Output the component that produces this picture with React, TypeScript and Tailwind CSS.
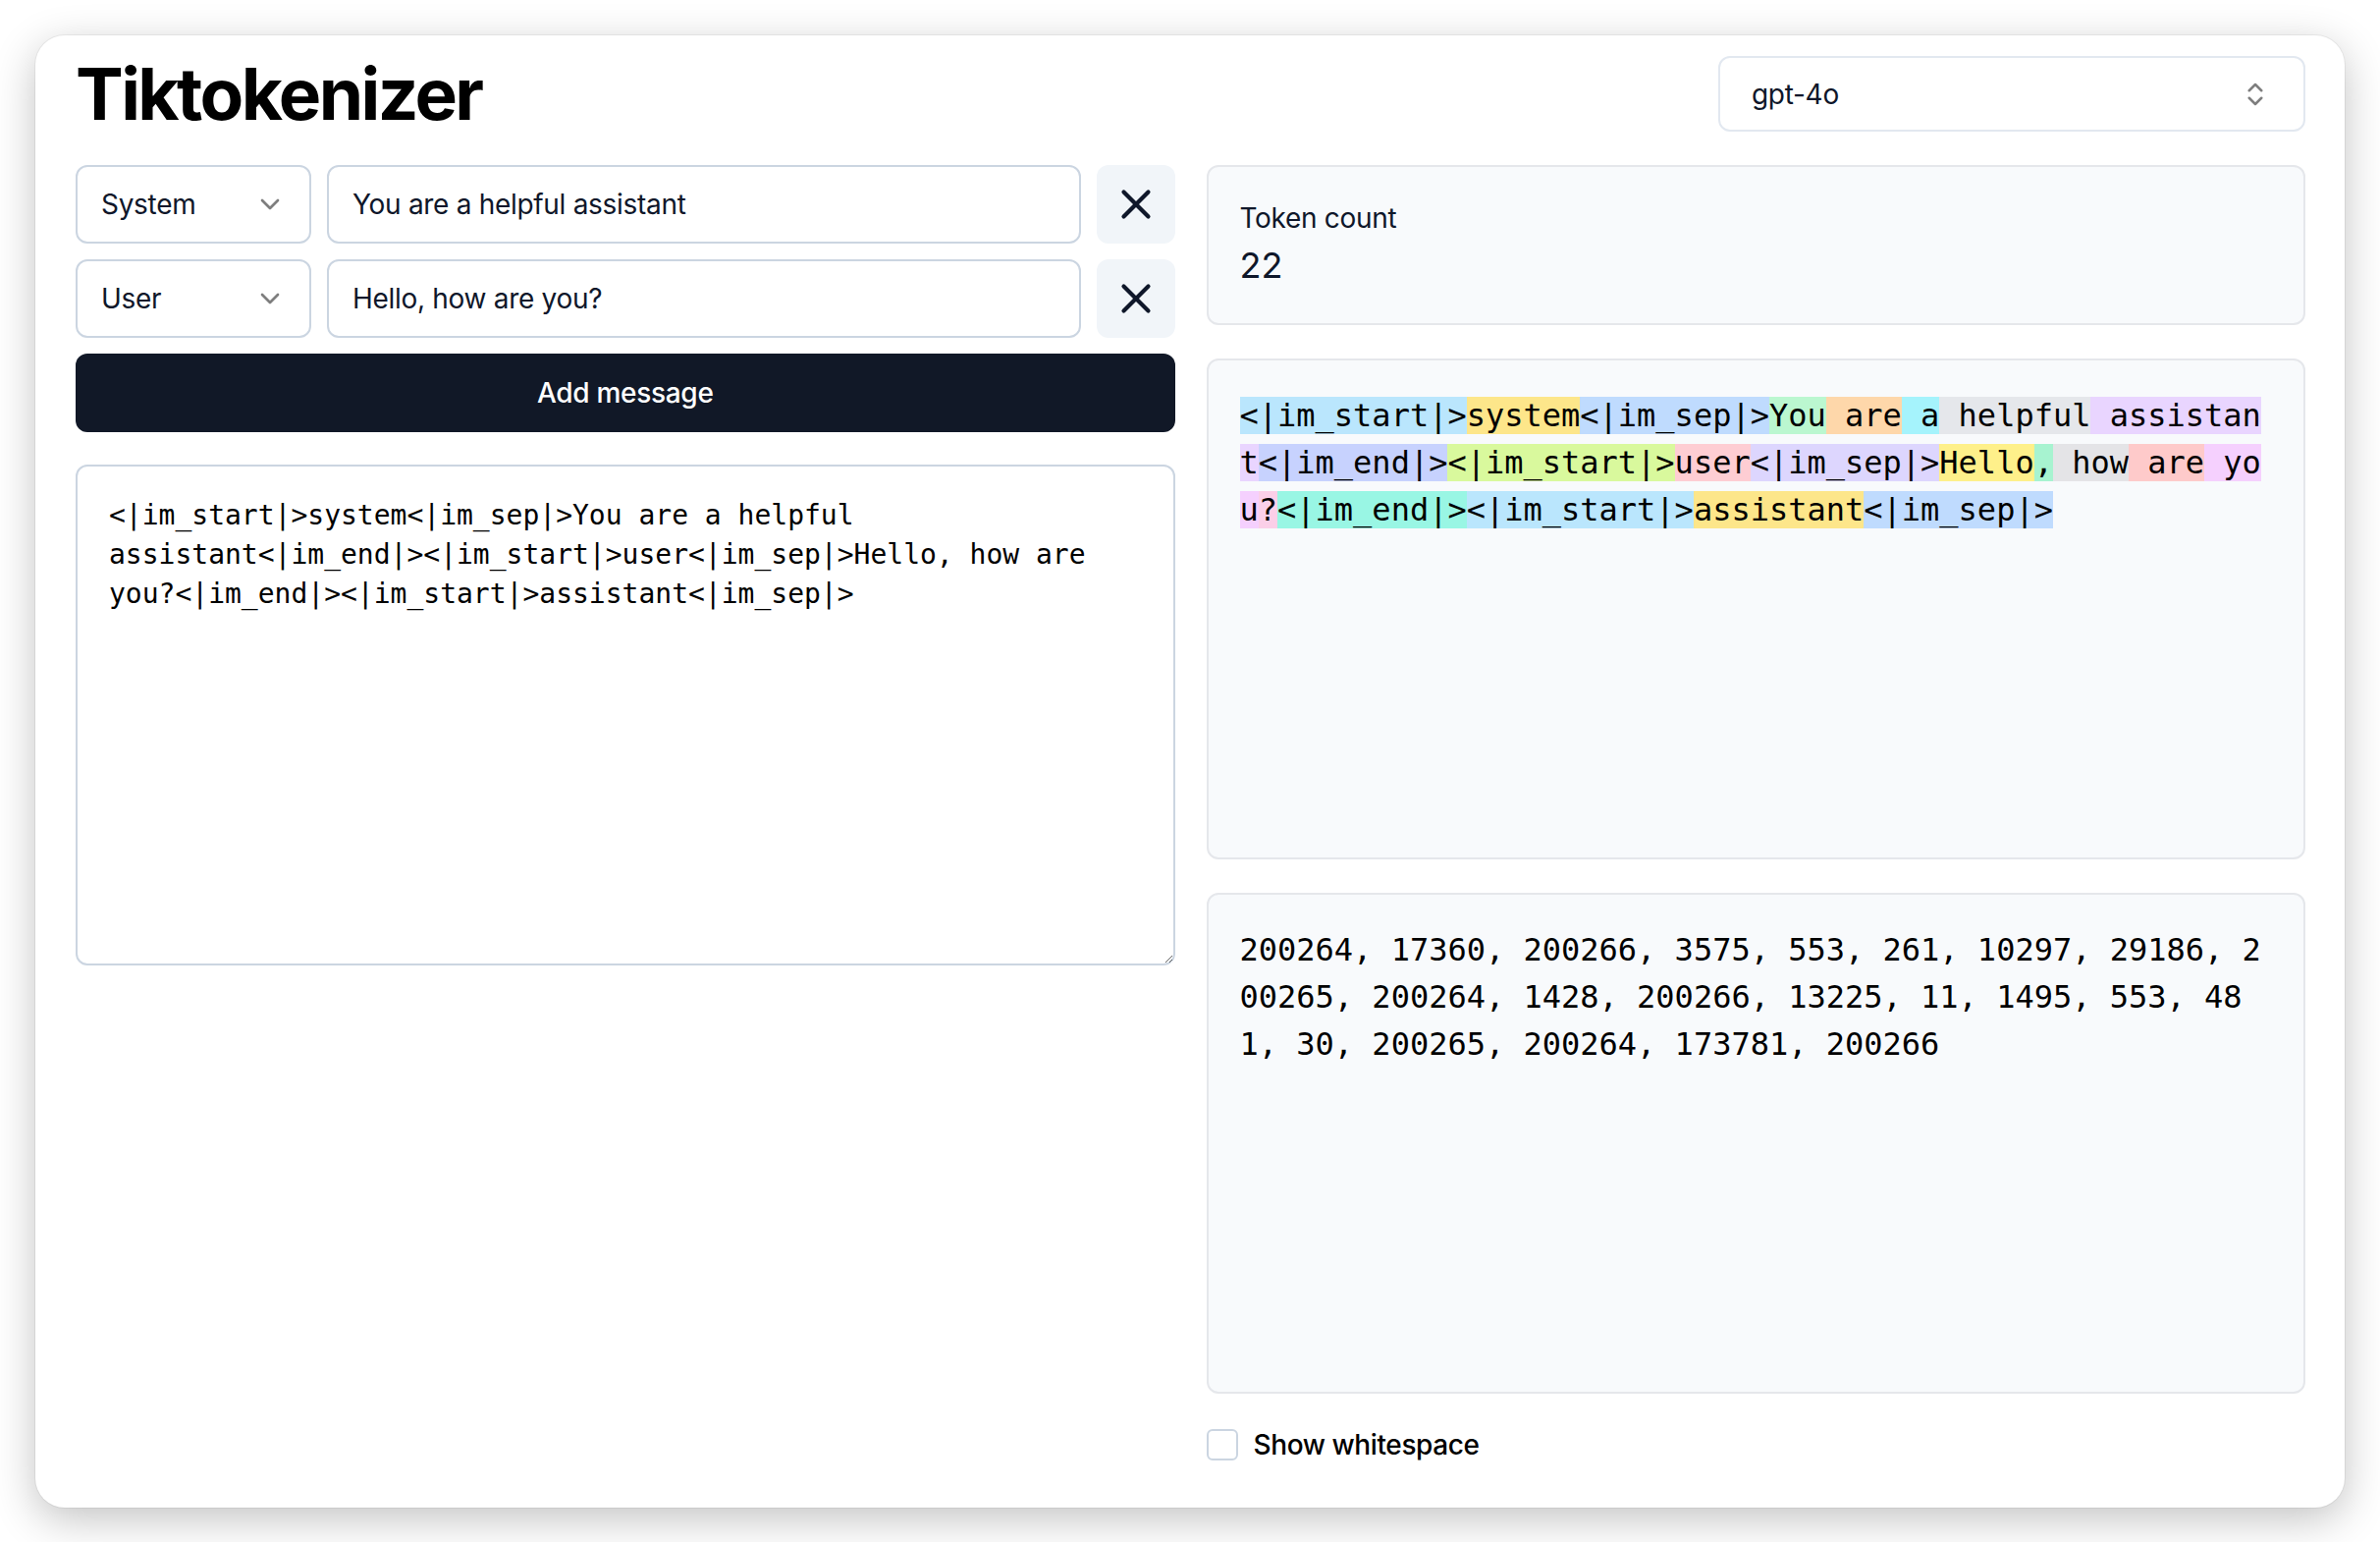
import React from "react";
import { X, ChevronDown, ChevronsUpDown } from "lucide-react";

const TOKENS: [string, string][] = [
  ["<|im_start|>", "bg-[#bae6fd]"],
  ["system", "bg-[#fde68a]"],
  ["<|im_sep|>", "bg-[#bfdbfe]"],
  ["You", "bg-[#bbf7d0]"],
  [" are", "bg-[#fed7aa]"],
  [" a", "bg-[#a5f3fc]"],
  [" helpful", "bg-[#e5e7eb]"],
  [" assistant", "bg-[#e9d5ff]"],
  ["<|im_end|>", "bg-[#c7d2fe]"],
  ["<|im_start|>", "bg-[#d9f99d]"],
  ["user", "bg-[#fecdd3]"],
  ["<|im_sep|>", "bg-[#ddd6fe]"],
  ["Hello", "bg-[#fef08a]"],
  [",", "bg-[#a7f3d0]"],
  [" how", "bg-[#e4e4e7]"],
  [" are", "bg-[#fecaca]"],
  [" you", "bg-[#f5d0fe]"],
  ["?", "bg-[#fbcfe8]"],
  ["<|im_end|>", "bg-[#99f6e4]"],
  ["<|im_start|>", "bg-[#bae6fd]"],
  ["assistant", "bg-[#fde68a]"],
  ["<|im_sep|>", "bg-[#bfdbfe]"],
];

const IDS = [
  200264, 17360, 200266, 3575, 553, 261, 10297, 29186, 200265, 200264, 1428,
  200266, 13225, 11, 1495, 553, 481, 30, 200265, 200264, 173781, 200266,
];

const PROMPT =
  "<|im_start|>system<|im_sep|>You are a helpful assistant<|im_end|><|im_start|>user<|im_sep|>Hello, how are you?<|im_end|><|im_start|>assistant<|im_sep|>";

const sans = { fontFamily: "Inter, 'Noto Sans', sans-serif" };
const mono = { fontFamily: "'DejaVu Sans Mono', 'Liberation Mono', monospace" };

function MessageRow({ role, content }: { role: string; content: string }) {
  return (
    <div className="flex h-[80px] gap-[16px]">
      <div className="flex h-[80px] w-[240px] shrink-0 items-center justify-between rounded-[12px] border-2 border-[#cbd5e1] bg-white pl-[24px] pr-[24px] text-[28px] leading-[40px] tracking-[-0.3px] text-[#0f172a]">
        <span>{role}</span>
        <ChevronDown size={32} strokeWidth={2} className="text-black opacity-50" />
      </div>
      <input
        readOnly
        value={content}
        className="h-[80px] min-w-0 flex-1 rounded-[12px] border-2 border-[#cbd5e1] bg-white px-[24px] text-[28px] leading-[40px] tracking-[-0.3px] text-[#0f172a] outline-none"
        style={sans}
      />
      <div className="flex h-[80px] w-[80px] shrink-0 items-center justify-center rounded-[12px] bg-[#f1f5f9] text-[#0f172a]">
        <X size={50} strokeWidth={2} />
      </div>
    </div>
  );
}

export default function App() {
  return (
    <div className="h-[1570px] w-[2424px] overflow-hidden bg-white pl-[36px] pt-[36px]" style={sans}>
      <div className="h-[1499px] w-[2352px] rounded-[30px] bg-white pl-[41px] pr-[40px] pt-[21px] shadow-[0_12px_44px_rgba(0,0,0,0.24),0_0_0_1px_rgba(0,0,0,0.05)]">
        <header className="flex h-[77px] items-center justify-between">
          <h1 className="text-[73px] font-bold leading-[80px] tracking-[-2.6px] text-black">Tiktokenizer</h1>
          <div className="flex h-[77px] w-[598px] items-center justify-between rounded-[12px] border-2 border-[#e2e8f0] bg-white pl-[32px] pr-[34px] text-[28px] leading-[40px] tracking-[-0.3px] text-[#0f172a]">
            <span>gpt-4o</span>
            <ChevronsUpDown size={30} strokeWidth={2} className="text-black opacity-50" />
          </div>
        </header>

        <div className="mt-[34px] grid grid-cols-2 gap-x-[32px]">
          <div className="flex flex-col">
            <div className="flex flex-col gap-[16px]">
              <MessageRow role="System" content="You are a helpful assistant" />
              <MessageRow role="User" content="Hello, how are you?" />
              <button className="flex h-[80px] items-center justify-center rounded-[12px] bg-[#111827] text-[28px] font-medium leading-[40px] tracking-[-0.3px] text-white">
                Add message
              </button>
            </div>
            <textarea
              readOnly
              defaultValue={PROMPT}
              className="mt-[33px] h-[510px] w-full rounded-[12px] border-2 border-[#cbd5e1] bg-white px-[32px] pb-[30px] pt-[30px] text-[28px] leading-[40px] text-black outline-none"
              style={mono}
            />
          </div>

          <div className="flex flex-col">
            <div className="rounded-[12px] border-2 border-[#e5e7eb] bg-[#f8fafc] px-[32px] pb-[31px] pt-[32px] text-[#0f172a]">
              <p className="text-[28px] leading-[40px] tracking-[-0.3px]">Token count</p>
              <p className="text-[36px] leading-[56px]">22</p>
            </div>

            <pre
              className="mt-[34px] h-[510px] overflow-hidden whitespace-pre-wrap break-all rounded-[12px] border-2 border-[#e5e7eb] bg-[#f8fafc] p-[32px] text-[32px] leading-[48px] text-black"
              style={mono}
            >
              {TOKENS.map(([t, c], i) => (
                <span key={i} className={c}>
                  {t}
                </span>
              ))}
            </pre>

            <pre
              className="mt-[34px] h-[510px] overflow-hidden whitespace-pre-wrap break-all rounded-[12px] border-2 border-[#e5e7eb] bg-[#f8fafc] p-[32px] text-[32px] leading-[48px] text-black"
              style={mono}
            >
              {IDS.join(", ")}
            </pre>

            <label className="mt-[32px] flex items-center gap-[16px]">
              <span className="h-[32px] w-[32px] rounded-[6px] border-2 border-[#cbd5e1] bg-white" />
              <span className="text-[28px] font-medium leading-[40px] tracking-[-0.4px] text-black">Show whitespace</span>
            </label>
          </div>
        </div>
      </div>
    </div>
  );
}
